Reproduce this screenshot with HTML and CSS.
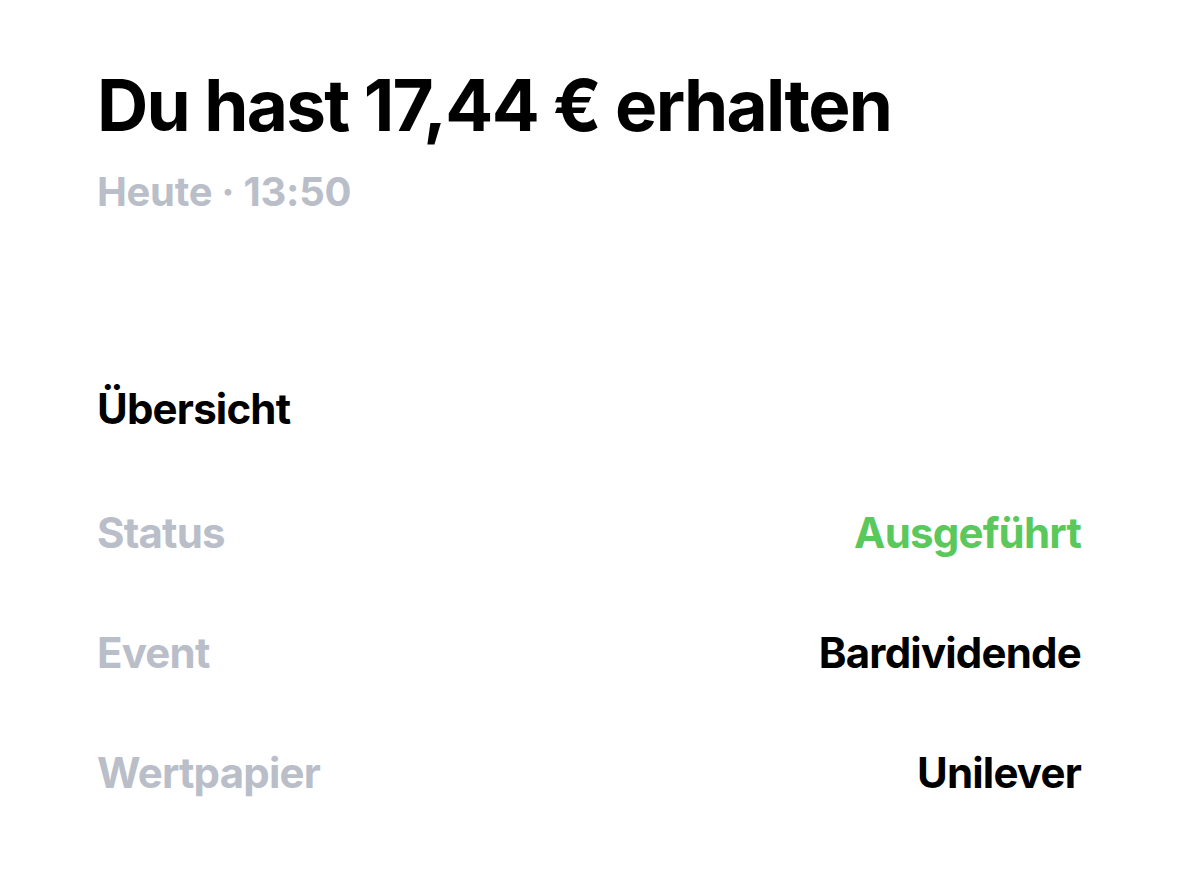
FILE: index.html
```html
<!DOCTYPE html>
<html lang="de">
<head>
<meta charset="utf-8">
<link rel="stylesheet" href="styles.css">
</head>
<body>
<main class="page">
  <header class="head">
    <h1 class="title">Du hast 17,44 € erhalten</h1>
    <p class="meta">Heute · 13:50</p>
  </header>
  <section class="overview">
    <h2 class="section-title">Übersicht</h2>
    <div class="row"><span class="label">Status</span><span class="value ok">Ausgeführt</span></div>
    <div class="row"><span class="label">Event</span><span class="value">Bardividende</span></div>
    <div class="row"><span class="label">Wertpapier</span><span class="value">Unilever</span></div>
  </section>
</main>
</body>
</html>
```
FILE: styles.css
```css
html, body { margin: 0; padding: 0; background: #fff; }
body { font-family: Inter, "Noto Sans", sans-serif; color: #000; }
.page { padding: 63px 98px 0 97px; }
.title { margin: 0; font-size: 71px; font-weight: 700; letter-spacing: -1.7px; line-height: 84px; }
.meta { margin: 21px 0 0; font-size: 40px; font-weight: 700; color: #b9bec8; line-height: 48px; letter-spacing: -0.3px; }
.overview { margin-top: 169px; }
.section-title { margin: 0; font-size: 42px; font-weight: 700; line-height: 48px; letter-spacing: -0.8px; }
.row { display: flex; justify-content: space-between; align-items: baseline; margin-top: 72px; font-size: 42px; font-weight: 700; line-height: 48px; letter-spacing: -0.8px; }
.overview .row:first-of-type { margin-top: 76px; }
.label { color: #b9bec8; }
.value { color: #000; }
.value.ok { color: #5ac85a; }
```
